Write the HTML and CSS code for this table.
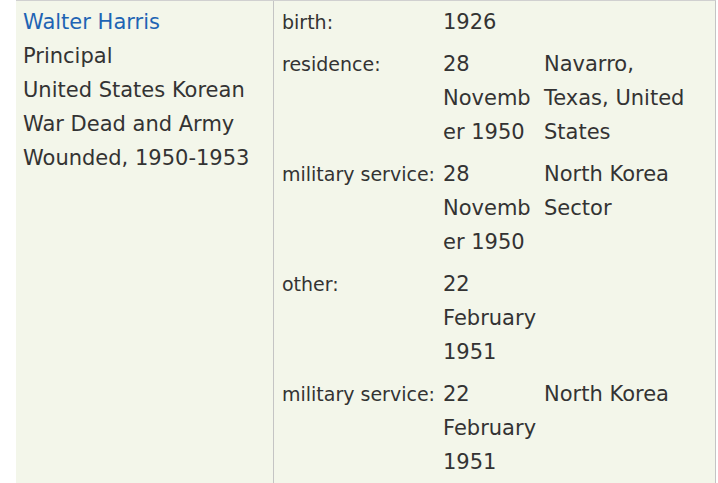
FILE: index.html
```html
<!DOCTYPE html>
<html>
<head>
<meta charset="utf-8">
<link rel="stylesheet" href="styles.css">
</head>
<body>
<div class="record">
  <div class="person">
    <a class="name" href="#">Walter Harris</a>
    <div>Principal</div>
    <div>United States Korean War Dead and Army Wounded, 1950-1953</div>
  </div>
  <div class="events">
    <div class="event">
      <div class="label">birth:</div>
      <div class="date">1926</div>
      <div class="place"></div>
    </div>
    <div class="event">
      <div class="label">residence:</div>
      <div class="date">28 November 1950</div>
      <div class="place">Navarro, Texas, United States</div>
    </div>
    <div class="event">
      <div class="label">military service:</div>
      <div class="date">28 November 1950</div>
      <div class="place">North Korea Sector</div>
    </div>
    <div class="event">
      <div class="label">other:</div>
      <div class="date">22 February 1951</div>
      <div class="place"></div>
    </div>
    <div class="event">
      <div class="label">military service:</div>
      <div class="date">22 February 1951</div>
      <div class="place">North Korea</div>
    </div>
  </div>
</div>
</body>
</html>
```

FILE: styles.css
```css
html, body {
  margin: 0;
  padding: 0;
  background: #ffffff;
}
body {
  font-family: "DejaVu Sans", Verdana, sans-serif;
  font-size: 21px;
  line-height: 34px;
  color: #333333;
}
.record {
  margin-left: 16px;
  width: 699px;
  display: flex;
  border-top: 1px solid #d0d0d0;
  border-bottom: 1px solid #c4c4c4;
  border-right: 1px solid #c4c4c4;
  background: #f3f6ea;
}
.person {
  width: 243px;
  padding: 4px 7px 4px 7px;
  border-right: 1px solid #c4c4c4;
}
.name {
  display: block;
  color: #1e64b4;
  text-decoration: none;
}
.events {
  flex: 1;
  padding-left: 8px;
}
.event {
  display: grid;
  grid-template-columns: 161px 101px 1fr;
  align-items: baseline;
  padding: 4px 0;
}
.label {
  white-space: nowrap;
  font-size: 19px;
}
.date {
  width: 96px;
  overflow-wrap: anywhere;
}
.place {
  width: 150px;
}
```
